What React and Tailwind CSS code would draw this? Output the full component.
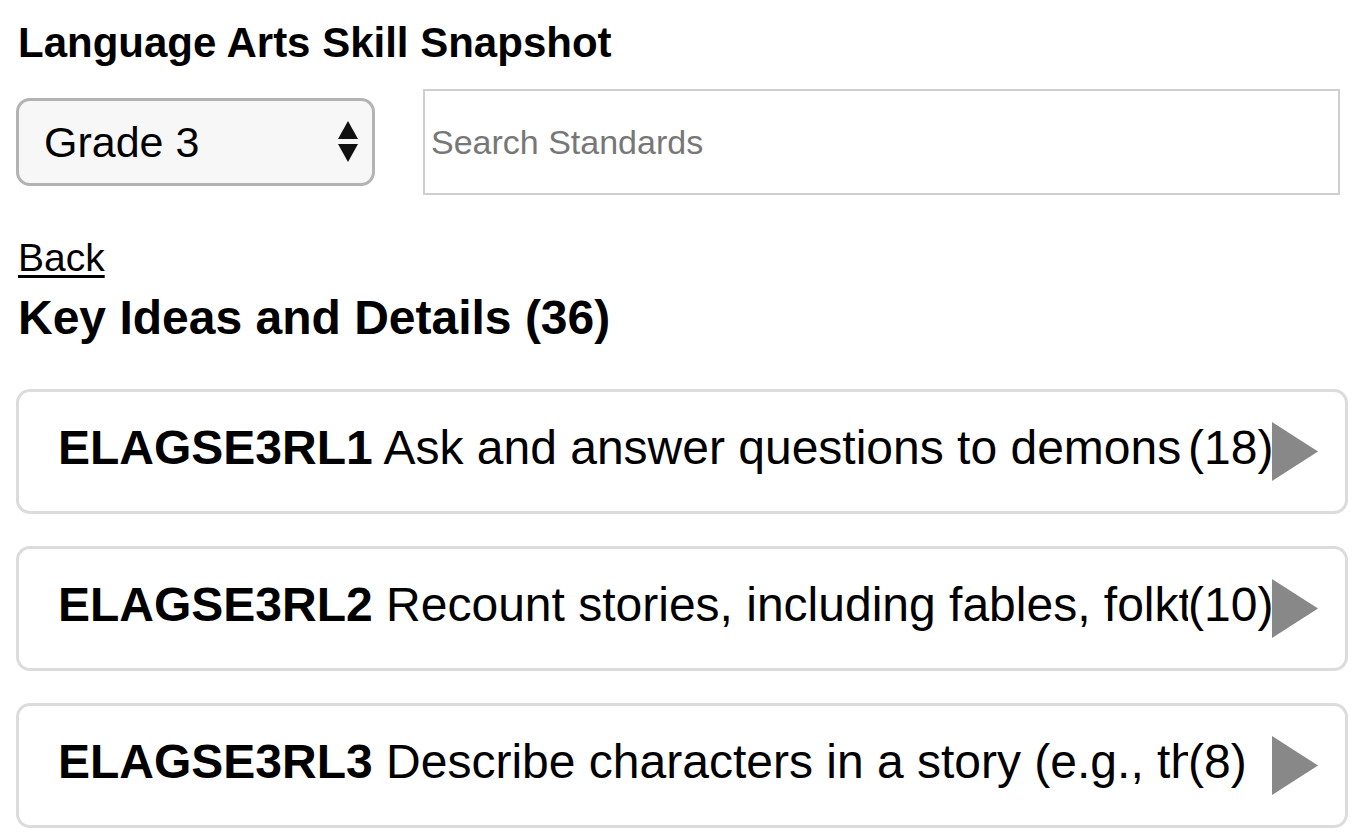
import React from 'react';

const standards = [
    { code: 'ELAGSE3RL1', text: 'Ask and answer questions to demons', count: 18 },
    { code: 'ELAGSE3RL2', text: 'Recount stories, including fables, folktales', count: 10 },
    { code: 'ELAGSE3RL3', text: 'Describe characters in a story (e.g., their traits', count: 8 },
];

export default function App() {
    return (
        <div className="min-h-screen bg-white text-black pl-4 font-['Liberation_Sans',Arial,sans-serif]">
            <h1 className="pt-[22px] pl-0.5 text-[42px] leading-none font-bold">Language Arts Skill Snapshot</h1>

            {/* grade picker + search */}
            <div className="flex items-center mt-[25px] h-[106px]">
                <div className="flex items-center justify-between w-[359px] h-[88px] pl-[25px] pr-[13px] rounded-[14px] border-[3px] border-[#b3b3b3] bg-[#f7f7f7]">
                    <span className="text-[43px] leading-none">Grade 3</span>
                    <svg width="22" height="42" viewBox="0 0 22 42">
                        <polygon points="11,0 21,18 1,18" fill="#111" />
                        <polygon points="1,23 21,23 11,41" fill="#111" />
                    </svg>
                </div>
                <div className="ml-[48px] w-[917px] h-full border-2 border-[#cfcfcf] flex items-center pl-[6px]">
                    <span className="text-[34px] leading-none text-[#777]">Search Standards</span>
                </div>
            </div>

            <a className="block w-fit mt-[43px] pl-0.5 text-[39px] leading-none underline decoration-[3px] underline-offset-[4px]">Back</a>
            <h2 className="mt-[17px] pl-0.5 text-[48px] leading-none font-bold">Key Ideas and Details (36)</h2>

            {/* standards list */}
            <div className="flex flex-col gap-8 mt-[47px]">
                {standards.map((s) => (
                    <div key={s.code} className="flex items-center w-[1332px] h-[125px] pl-[39px] rounded-[14px] border-[3px] border-[#dcdcdc]">
                        <span className="w-[1130px] overflow-hidden whitespace-nowrap text-[48px] leading-none pb-2">
                            <b>{s.code}</b> {s.text}
                        </span>
                        <span className="w-[84px] text-[48px] leading-none pb-2">({s.count})</span>
                        <svg width="46" height="59" viewBox="0 0 46 59">
                            <polygon points="0,0 46,29.5 0,59" fill="#888" />
                        </svg>
                    </div>
                ))}
            </div>
        </div>
    );
}
